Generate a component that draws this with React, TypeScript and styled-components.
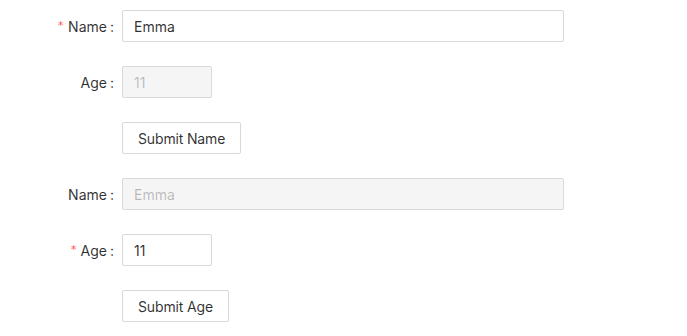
import React from "react";
import styled, { createGlobalStyle } from "styled-components";

const Global = createGlobalStyle`
  html, body { margin: 0; padding: 0; background: #fff; }
  body {
    font-family: Inter, "Noto Sans", sans-serif;
    font-size: 14px;
    color: rgba(0,0,0,0.85);
  }
`;

const Page = styled.div`
  padding: 10px 0 0 0;
`;

const Form = styled.form`
  display: flex;
  flex-direction: column;
`;

const Row = styled.div`
  display: grid;
  grid-template-columns: 122px 442px;
  height: 32px;
  margin-bottom: 24px;
`;

const Label = styled.label<{ $required?: boolean }>`
  display: flex;
  align-items: center;
  justify-content: flex-end;
  height: 32px;
  color: rgba(0,0,0,0.82);
  font-size: 14px;
  white-space: nowrap;
  &::before {
    content: ${(p) => (p.$required ? '"*"' : "none")};
    display: inline-block;
    margin-right: 4px;
    color: #ff4d4f;
    font-size: 14px;
    font-family: "DejaVu Sans", sans-serif;
    line-height: 1;
    transform: scale(0.75) translateY(-1px);
  }
  &::after {
    content: ":";
    margin: 0 8px 0 3px;
  }
`;

const Control = styled.div`
  display: flex;
  align-items: center;
`;

const Input = styled.input<{ $width?: number }>`
  box-sizing: border-box;
  width: ${(p) => (p.$width ? `${p.$width}px` : "100%")};
  height: 32px;
  padding: 4px 11px;
  font-family: inherit;
  font-size: 14px;
  color: rgba(0,0,0,0.82);
  background: #fff;
  border: 1px solid #d9d9d9;
  border-radius: 2px;
  outline: none;
  &:disabled {
    background: #f5f5f5;
    color: rgba(0,0,0,0.25);
    cursor: not-allowed;
  }
`;

const Button = styled.button`
  box-sizing: border-box;
  height: 32px;
  padding: 4px 15px;
  font-family: inherit;
  font-size: 14px;
  letter-spacing: -0.15px;
  color: rgba(0,0,0,0.82);
  background: #fff;
  border: 1px solid #d9d9d9;
  border-radius: 2px;
  cursor: pointer;
`;

const Spacer = styled.div``;

export default function App() {
  return (
    <Page>
      <Global />
      <Form onSubmit={(e) => e.preventDefault()}>
        <Row>
          <Label $required>Name</Label>
          <Control>
            <Input defaultValue="Emma" />
          </Control>
        </Row>
        <Row>
          <Label>Age</Label>
          <Control>
            <Input $width={90} defaultValue="11" disabled />
          </Control>
        </Row>
        <Row>
          <Spacer />
          <Control>
            <Button type="button">Submit Name</Button>
          </Control>
        </Row>
      </Form>
      <Form onSubmit={(e) => e.preventDefault()}>
        <Row>
          <Label>Name</Label>
          <Control>
            <Input defaultValue="Emma" disabled />
          </Control>
        </Row>
        <Row>
          <Label $required>Age</Label>
          <Control>
            <Input $width={90} defaultValue="11" />
          </Control>
        </Row>
        <Row>
          <Spacer />
          <Control>
            <Button type="button">Submit Age</Button>
          </Control>
        </Row>
      </Form>
    </Page>
  );
}
